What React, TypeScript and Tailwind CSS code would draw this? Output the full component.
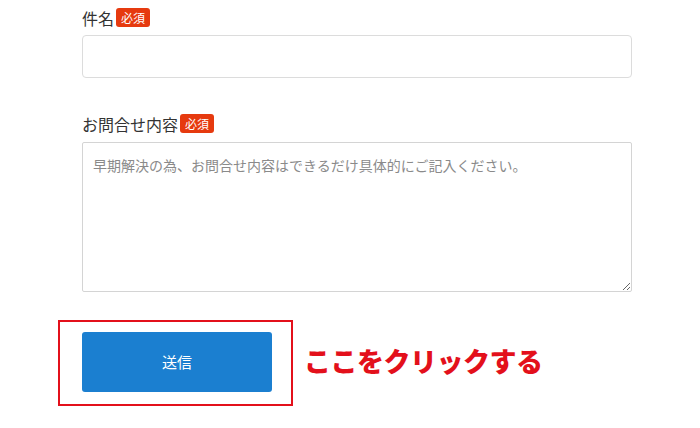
const font = { fontFamily: '"Noto Sans CJK JP", "Noto Sans", sans-serif' };

function Badge() {
  return (
    <span className="inline-flex h-[19px] w-[34px] items-center justify-center rounded-[3px] bg-[#e63a0f] text-[12px] leading-none text-white">
      必須
    </span>
  );
}

export default function App() {
  return (
    <div className="h-[428px] w-[700px] overflow-hidden bg-white" style={font}>
      <div className="pl-[82px] pt-[7px]">
        <div className="flex h-[21px] items-center gap-[2px]">
          <span className="text-[16px] leading-none text-[#333]">件名</span>
          <Badge />
        </div>
        <input
          type="text"
          className="mt-[7px] block h-[43px] w-[550px] rounded-[4px] border border-[#dcdcdc] bg-white px-[10px] text-[14px] outline-none"
        />
        <div className="mt-[35px] flex h-[21px] items-center gap-[2px]">
          <span className="text-[16px] leading-none text-[#333]">お問合せ内容</span>
          <Badge />
        </div>
        <textarea
          placeholder="早期解決の為、お問合せ内容はできるだけ具体的にご記入ください。"
          className="mt-[8px] block h-[150px] w-[550px] rounded-[2px] border border-[#d4d4d4] bg-white px-[10px] pt-[12px] text-[14px] leading-[21px] text-[#333] outline-none placeholder:text-[#8a8a8a]"
        />
      </div>
      <div className="ml-[58px] mt-[28px] flex items-center gap-[11px]">
        <div className="border-2 border-[#e3101b] pb-[12px] pl-[22px] pr-[19px] pt-[10px]">
          <button className="flex h-[60px] w-[190px] items-center justify-center rounded-[3px] bg-[#1b7fd0] text-[15px] text-white">
            送信
          </button>
        </div>
        <span className="mb-[6px] text-[27px] font-black leading-none tracking-[-0.5px] text-[#e3101b]">
          ここをクリックする
        </span>
      </div>
    </div>
  );
}
